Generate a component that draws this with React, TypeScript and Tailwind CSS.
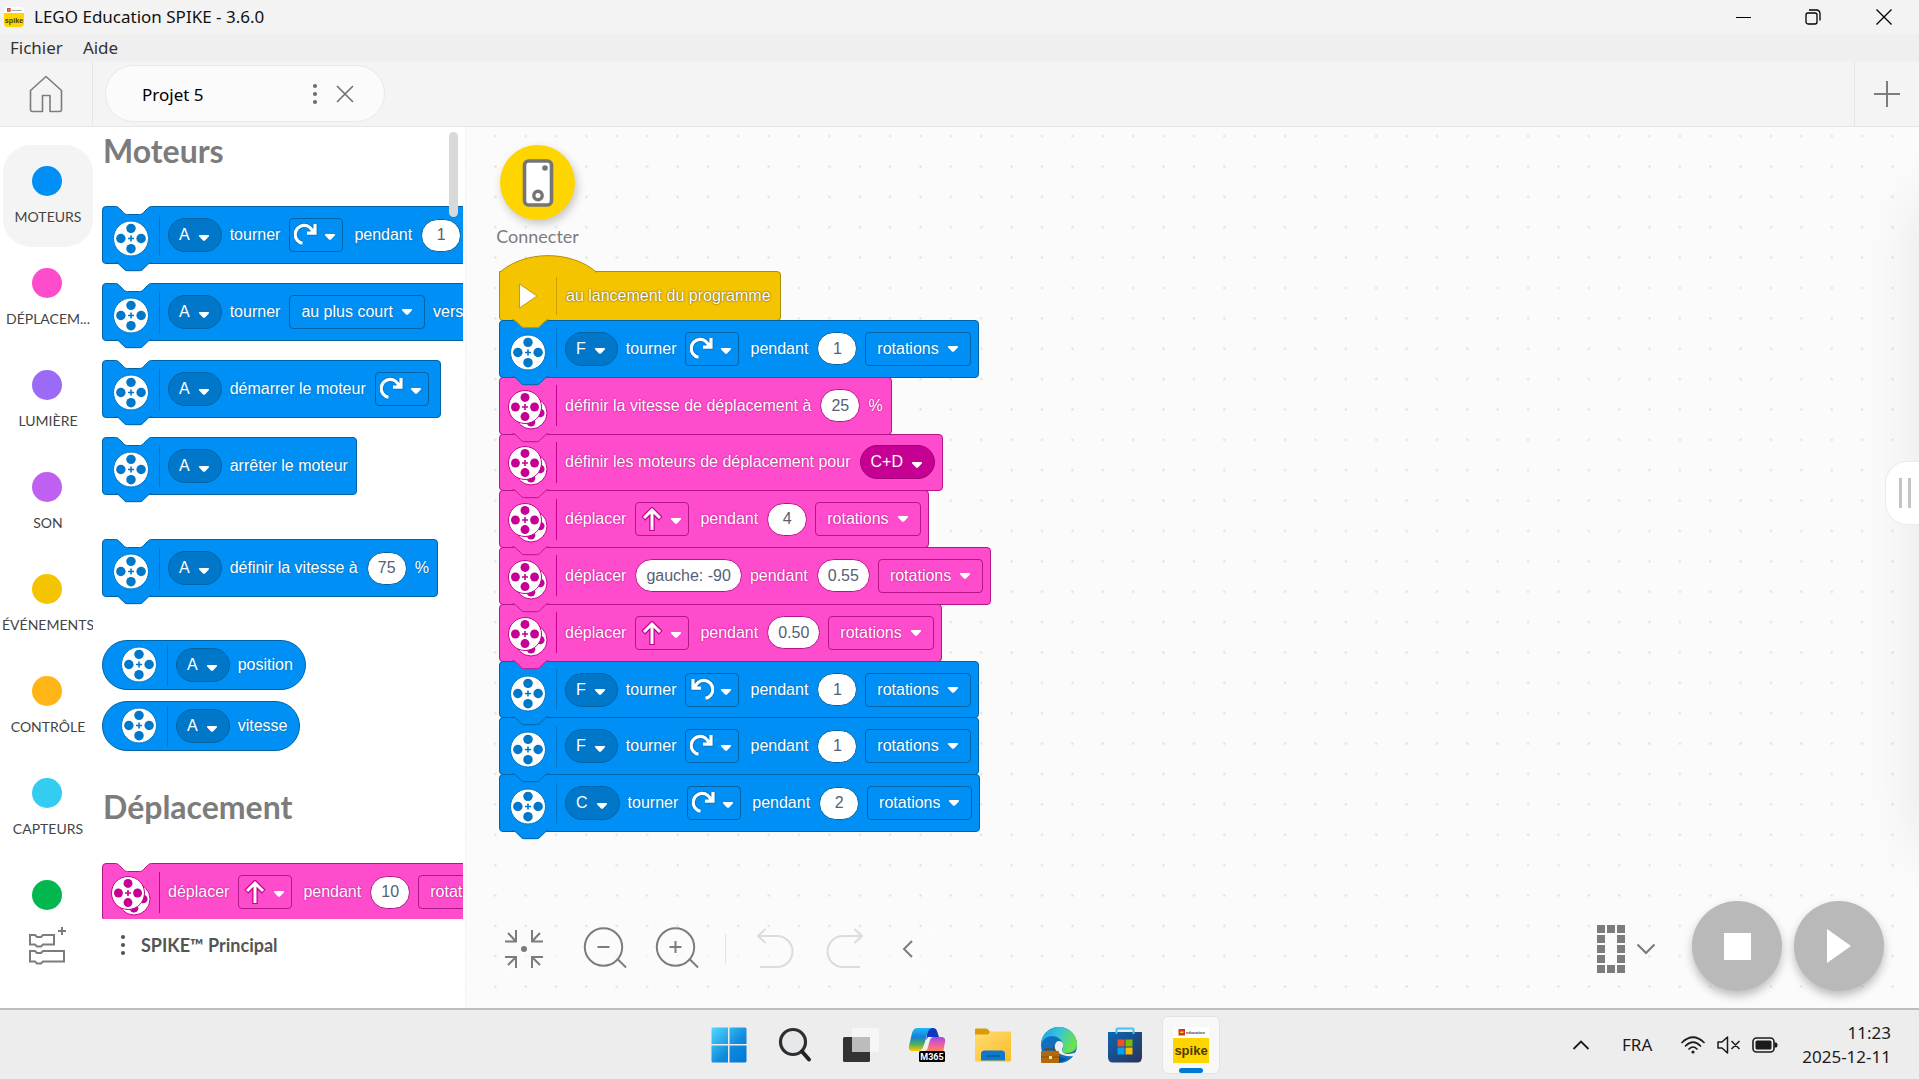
import type { ReactNode } from 'react';
import { clsx } from 'clsx';

type Tone = 'blue' | 'pink' | 'yellow';

const tones: Record<Tone, { body: string; shape: string; ink: string; label: string; line: string; field: string; pill: string; round: string }> = {
  blue: {
    body: 'bg-[#0090f5] border-[#0063a5]',
    shape: 'fill-[#0090f5] stroke-[#0063a5]',
    ink: '#0077c9',
    label: 'text-shadow-[0_0_2px_#0063a5]',
    line: 'bg-[#0077c9]',
    field: 'border-[#0063a5] bg-[#0090f5]',
    pill: 'border-[#0063a5] bg-[#0077c9]',
    round: 'border-[#0063a5]',
  },
  pink: {
    body: 'bg-[#ff4ccd] border-[#b3168b]',
    shape: 'fill-[#ff4ccd] stroke-[#b3168b]',
    ink: '#c60092',
    label: 'text-shadow-[0_0_2px_#a50079]',
    line: 'bg-[#c60092]',
    field: 'border-[#b3168b] bg-[#ff4ccd]',
    pill: 'border-[#a50079] bg-[#c60092]',
    round: 'border-[#b3168b]',
  },
  yellow: {
    body: 'bg-[#f5c400] border-[#b08c00]',
    shape: 'fill-[#f5c400] stroke-[#b08c00]',
    ink: '#c9a000',
    label: 'text-shadow-[0_0_2px_#3d3000]',
    line: 'bg-[#c9a000]',
    field: 'border-[#b08c00] bg-[#f5c400]',
    pill: 'border-[#b08c00] bg-[#c9a000]',
    round: 'border-[#b08c00]',
  },
};

const NOTCH = 'c2 0 3 1 4 2l4 4c1 1 2 2 4 2h12c2 0 3 -1 4 -2l4 -4c1 -1 2 -2 4 -2';

function Bump({ tone }: { tone: Tone }) {
  return (
    <svg className="pointer-events-none absolute top-full left-[12px] z-10 -mt-px" width="38" height="10" aria-hidden="true">
      <path d={`M0.5 1${NOTCH}V-1H0.5Z`} className={clsx(tones[tone].shape, 'stroke-none')} />
      <path d={`M0.5 0.7${NOTCH}`} className={tones[tone].shape} />
    </svg>
  );
}

function Notch({ tone }: { tone: Tone }) {
  return (
    <svg className="pointer-events-none absolute -top-px left-[12px]" width="38" height="10" aria-hidden="true">
      <path d={`M0.5 0.5${NOTCH}V-1H0.5Z`} fill="#fff" />
      <path d={`M0.5 0.5${NOTCH}`} className={clsx(tones[tone].shape, 'fill-none')} />
    </svg>
  );
}

function ReelFace({ cx, cy, r, color }: { cx: number; cy: number; r: number; color: string }) {
  const o = r * 0.58;
  return (
    <g>
      <circle cx={cx} cy={cy} r={r} fill="#fff" stroke={color} />
      <g fill={color}>
        <circle cx={cx} cy={cy - o} r={r * 0.27} />
        <circle cx={cx} cy={cy + o} r={r * 0.27} />
        <circle cx={cx - o} cy={cy} r={r * 0.27} />
        <circle cx={cx + o} cy={cy} r={r * 0.27} />
      </g>
      <path d={`M${cx - 3} ${cy}h6M${cx} ${cy - 3}v6`} stroke={color} strokeWidth="1.6" />
    </g>
  );
}

function Reel({ tone }: { tone: Tone }) {
  return (
    <svg width="40" height="40" viewBox="0 0 40 40" aria-hidden="true">
      {tone === 'pink' ? (
        <>
          <ReelFace cx={23} cy={23} r={16} color={tones.pink.ink} />
          <ReelFace cx={17} cy={17} r={16.5} color={tones.pink.ink} />
        </>
      ) : (
        <ReelFace cx={20} cy={19.5} r={17.5} color={tones.blue.ink} />
      )}
    </svg>
  );
}

function Arrow() {
  return (
    <svg width="12" height="8" viewBox="0 0 12 8" aria-hidden="true">
      <path d="M1.8 1h8.4c.9 0 1.2.8.6 1.4L7 6.400c-.6.6-1.4.6-2 0L1.200 2.400C.6 1.800.9 1 1.800 1z" fill="#fff" />
    </svg>
  );
}

function Block({ tone, notch, stacked, round, children }: { tone: Tone; notch?: boolean; stacked?: boolean; round?: boolean; children: ReactNode }) {
  const t = tones[tone];
  return (
    <div
      className={clsx(
        'relative flex w-max items-center border font-["Liberation_Sans",Arial,sans-serif] text-base text-white',
        round ? 'h-[50px] rounded-full pr-[11px] pl-[8px]' : 'rounded-[4px] pr-[7px]',
        !round && (stacked ? '-mb-px' : 'h-[58px]'),
        t.body,
      )}
    >
      {notch && <Notch tone={tone} />}
      {!round && <Bump tone={tone} />}
      <div className={clsx('flex w-[56px] justify-center', !round && 'pt-[8px]')}>
        <Reel tone={tone} />
      </div>
      <div className={clsx('mr-[8px] h-[41px] w-px', t.line)} />
      <div className="flex items-center gap-[8px]">{children}</div>
    </div>
  );
}

function Label({ tone, children, wide }: { tone: Tone; children: ReactNode; wide?: boolean }) {
  return <span className={clsx('mr-px whitespace-nowrap', wide && 'ml-[3px]', tones[tone].label)}>{children}</span>;
}

function Select({ tone, value, pill, name }: { tone: Tone; value: string; pill?: boolean; name: string }) {
  const t = tones[tone];
  return (
    <span className="relative flex items-center">
      <select
        aria-label={name}
        defaultValue={value}
        className={clsx(
          'field-sizing-content h-[34px] appearance-none border pr-[31px] text-base text-white outline-none',
          pill ? 'rounded-full pl-[10px]' : 'rounded-[4px] pl-[11px]',
          pill ? t.pill : t.field,
          !pill && t.label,
        )}
      >
        <option>{value}</option>
      </select>
      <span className={clsx('pointer-events-none absolute right-[12px]', pill && 'pt-[5px]')}>
        <Arrow />
      </span>
    </span>
  );
}

function Value({ tone, value, name }: { tone: Tone; value: string; name: string }) {
  return (
    <input
      type="text"
      aria-label={name}
      defaultValue={value}
      className={clsx('field-sizing-content h-[33px] min-w-[40px] rounded-full border bg-white px-[10px] text-center text-base text-[#575e75] outline-none', tones[tone].round)}
    />
  );
}

function TurnIcon({ ccw, color }: { ccw?: boolean; color: string }) {
  const d = 'M8.500 20.200A9 9 0 1 1 19 9.500M21 1V10.200H13';
  return (
    <svg width="24" height="24" viewBox="0 0 24 24" fill="none" className={ccw ? '-scale-x-100' : undefined} aria-hidden="true">
      <path d={d} stroke={color} strokeWidth="5" />
      <path d={d} stroke="#fff" strokeWidth="3.200" />
    </svg>
  );
}

function UpIcon({ color }: { color: string }) {
  return (
    <svg width="24" height="24" viewBox="0 0 24 24" fill="none" aria-hidden="true">
      <path d="M12 24V3M3.300 11.700L12 3L20.700 11.700" stroke={color} strokeWidth="5.500" />
      <path d="M12 23V3M4 11L12 3L20 11" stroke="#fff" strokeWidth="3" />
    </svg>
  );
}

function IconField({ tone, name, children }: { tone: Tone; name: string; children: ReactNode }) {
  return (
    <button type="button" aria-label={name} aria-haspopup="listbox" className={clsx('flex h-[34px] w-[54px] items-center justify-between rounded-[4px] border pr-[6px] pl-[4px]', tones[tone].field)}>
      {children}
      <span className="pt-[4px]">
        <Arrow />
      </span>
    </button>
  );
}

function TurnBlock({ port, turns, ccw }: { port: string; turns: string; ccw?: boolean }) {
  return (
    <Block tone="blue" stacked>
      <Select tone="blue" pill value={port} name="Port" />
      <Label tone="blue">tourner</Label>
      <IconField tone="blue" name="Sens de rotation">
        <TurnIcon ccw={ccw} color="#0077c9" />
      </IconField>
      <Label tone="blue" wide>pendant</Label>
      <Value tone="blue" value={turns} name="Durée" />
      <Select tone="blue" value="rotations" name="Unité" />
    </Block>
  );
}

function MoveBlock({ steer, amount }: { steer?: string; amount: string }) {
  return (
    <Block tone="pink" stacked>
      <Label tone="pink">déplacer</Label>
      {steer ? (
        <Value tone="pink" value={steer} name="Direction" />
      ) : (
        <IconField tone="pink" name="Direction">
          <UpIcon color="#c60092" />
        </IconField>
      )}
      <Label tone="pink" wide={!steer}>pendant</Label>
      <Value tone="pink" value={amount} name="Durée" />
      <Select tone="pink" value="rotations" name="Unité" />
    </Block>
  );
}

function HatBlock() {
  return (
    <div className="relative flex h-[50px] w-max items-center rounded-[4px] rounded-tl-none border border-[#b08c00] bg-[#f5c400] pr-[8px] font-['Liberation_Sans',Arial,sans-serif] text-base text-white">
      <svg className="absolute bottom-full -left-px -mb-px" width="100" height="18" aria-hidden="true">
        <path d="M0.5 18V17.500C26 -5 72 -5 98 17.500V18Z" fill="#f5c400" />
        <path d="M0.5 18V17.500C26 -5 72 -5 98 17.500" fill="none" stroke="#b08c00" />
      </svg>
      <Bump tone="yellow" />
      <div className="flex w-[56px] justify-center">
        <svg width="24" height="30" viewBox="0 0 24 30" aria-hidden="true">
          <path d="M3.500 3L21 15L3.500 27Z" fill="#fff" stroke="#c9a000" />
        </svg>
      </div>
      <div className="mr-[9px] h-[38px] w-px bg-[#c9a000]" />
      <Label tone="yellow">au lancement du programme</Label>
    </div>
  );
}

const categories = [
  { label: 'MOTEURS', dot: 'bg-[#0090f5]', active: true },
  { label: 'DÉPLACEM...', dot: 'bg-[#ff4ccd]' },
  { label: 'LUMIÈRE', dot: 'bg-[#9b6af6]' },
  { label: 'SON', dot: 'bg-[#c060f0]' },
  { label: 'ÉVÉNEMENTS', dot: 'bg-[#f5c400]' },
  { label: 'CONTRÔLE', dot: 'bg-[#ffb515]' },
  { label: 'CAPTEURS', dot: 'bg-[#34cdf2]' },
];

function CategoryNav() {
  return (
    <nav className="flex w-[93px] shrink-0 flex-col overflow-hidden pt-[18px] pl-[3px]">
      {categories.map((c) => (
        <button
          key={c.label}
          type="button"
          className={clsx('flex h-[102px] w-[90px] shrink-0 flex-col items-center rounded-[28px] pt-[21px]', c.active && 'bg-[#f4f4f4]')}
        >
          <span className={clsx('mr-[2px] size-[30px] shrink-0 rounded-full', c.dot)} />
          <span className="mt-[11px] text-sm leading-5 whitespace-nowrap text-[#444]">{c.label}</span>
        </button>
      ))}
      <button type="button" aria-label="Opérateurs" className="flex h-[51px] w-[90px] shrink-0 justify-center pt-[21px]">
        <span className="mr-[2px] size-[30px] rounded-full bg-[#00b84d]" />
      </button>
    </nav>
  );
}

function Heading({ children }: { children: ReactNode }) {
  return <h2 className="pl-px text-[32px] leading-10 font-bold text-[#7c7c7c]">{children}</h2>;
}

function Palette() {
  return (
    <div className="relative min-w-0 flex-1 overflow-hidden">
      <div className="mr-[2px] overflow-hidden pl-[9px]">
        <div className="h-[79px] pt-[4px]">
          <Heading>Moteurs</Heading>
        </div>
        <div className="flex flex-col gap-[19px]">
          <Block tone="blue" notch>
            <Select tone="blue" pill value="A" name="Port" />
            <Label tone="blue">tourner</Label>
            <IconField tone="blue" name="Sens de rotation">
              <TurnIcon color="#0077c9" />
            </IconField>
            <Label tone="blue" wide>pendant</Label>
            <Value tone="blue" value="1" name="Durée" />
            <Select tone="blue" value="rotations" name="Unité" />
          </Block>
          <Block tone="blue" notch>
            <Select tone="blue" pill value="A" name="Port" />
            <Label tone="blue">tourner</Label>
            <Select tone="blue" value="au plus court" name="Trajet" />
            <Label tone="blue">vers</Label>
            <Value tone="blue" value="0" name="Position" />
          </Block>
          <Block tone="blue" notch>
            <Select tone="blue" pill value="A" name="Port" />
            <Label tone="blue">démarrer le moteur</Label>
            <IconField tone="blue" name="Sens de rotation">
              <TurnIcon color="#0077c9" />
            </IconField>
            <span className="-ml-[4px]" />
          </Block>
          <Block tone="blue" notch>
            <Select tone="blue" pill value="A" name="Port" />
            <Label tone="blue">arrêter le moteur</Label>
          </Block>
        </div>
        <div className="mt-[44px]">
          <Block tone="blue" notch>
            <Select tone="blue" pill value="A" name="Port" />
            <Label tone="blue">définir la vitesse à</Label>
            <Value tone="blue" value="75" name="Vitesse" />
            <Label tone="blue">%</Label>
          </Block>
        </div>
        <div className="mt-[43px] flex flex-col gap-[11px]">
          <Block tone="blue" round>
            <Select tone="blue" pill value="A" name="Port" />
            <Label tone="blue">position</Label>
          </Block>
          <Block tone="blue" round>
            <Select tone="blue" pill value="A" name="Port" />
            <Label tone="blue">vitesse</Label>
          </Block>
        </div>
        <div className="h-[112px] pt-[36px]">
          <Heading>Déplacement</Heading>
        </div>
        <Block tone="pink" notch>
          <Label tone="pink">déplacer</Label>
          <IconField tone="pink" name="Direction">
            <UpIcon color="#c60092" />
          </IconField>
          <Label tone="pink" wide>pendant</Label>
          <Value tone="pink" value="10" name="Durée" />
          <Select tone="pink" value="rotations" name="Unité" />
        </Block>
      </div>
      <div className="absolute top-[5px] right-[7px] h-[85px] w-[9px] rounded-full bg-[#d9d9d9]" />
    </div>
  );
}

function Dots({ className }: { className?: string }) {
  return (
    <svg width="6" height="22" viewBox="0 0 6 22" fill="currentColor" className={className} aria-hidden="true">
      <circle cx="3" cy="3" r="2.100" />
      <circle cx="3" cy="11" r="2.100" />
      <circle cx="3" cy="19" r="2.100" />
    </svg>
  );
}

function SidebarFooter() {
  return (
    <div className="flex h-[89px] shrink-0 items-start pt-[6px]">
      <button type="button" aria-label="Ajouter des extensions" className="ml-[28px] text-[#7c7c7c]">
        <svg width="40" height="40" viewBox="0 0 40 40" fill="none" stroke="currentColor" strokeWidth="2" aria-hidden="true">
          <path d="M34 2V10M30 6H38" />
          <path d="M2 10H7L9 12H13L15 10H26V19.500H15L13 21.500H9L7 19.500H2Z" />
          <path d="M2 26H7L9 28H13L15 26H36V36.500H15L13 38.500H9L7 36.500H2Z" />
        </svg>
      </button>
      <button type="button" className="ml-[52px] flex items-center pt-[8px] text-[#555]">
        <Dots />
        <span className="ml-[15px] text-lg leading-6 font-bold">SPIKE™ Principal</span>
      </button>
    </div>
  );
}

function Sidebar() {
  return (
    <aside className="flex w-[466px] shrink-0 flex-col border-r border-[#f4f4f4] bg-white">
      <div className="flex min-h-0 flex-1">
        <CategoryNav />
        <Palette />
      </div>
      <SidebarFooter />
    </aside>
  );
}

function ConnectButton() {
  return (
    <button type="button" className="ml-[29px] flex w-[85px] flex-col items-center pt-[18px]">
      <span className="flex size-[75px] items-center justify-center rounded-full bg-[#ffd500] shadow-[2px_4px_10px_rgba(0,0,0,0.22)]">
        <svg width="32" height="48" viewBox="0 0 32 48" aria-hidden="true">
          <rect x="2.500" y="2" width="27" height="44" rx="4" fill="#fff" stroke="#757575" strokeWidth="3.600" />
          <circle cx="23" cy="9" r="2.800" fill="#757575" />
          <circle cx="16" cy="36.500" r="4.200" fill="#fff" stroke="#757575" strokeWidth="3.400" />
        </svg>
      </span>
      <span className="mt-[4px] text-lg leading-6 text-[#7c7c7c]">Connecter</span>
    </button>
  );
}

function Zoom({ plus }: { plus?: boolean }) {
  return (
    <svg width="44" height="44" viewBox="0 0 44 44" fill="none" stroke="currentColor" strokeWidth="2" aria-hidden="true">
      <circle cx="20.500" cy="20" r="18.700" />
      <path d="M34.500 32L43 40.500M14.500 20H26.500" />
      {plus && <path d="M20.500 14V26" />}
    </svg>
  );
}

function Undo({ flip }: { flip?: boolean }) {
  return (
    <svg width="38" height="42" viewBox="0 0 38 42" fill="none" stroke="#dcdcdc" strokeWidth="2" className={flip ? '-scale-x-100' : undefined} aria-hidden="true">
      <path d="M2 8H21A15.500 15.500 0 0 1 21 39H4M9.500 1L2 8L9.500 15" />
    </svg>
  );
}

function CanvasTools() {
  return (
    <div className="flex items-center rounded-lg bg-[#fbfbfb]/60 pr-[20px] text-[#7c7c7c]">
      <button type="button" aria-label="Ajuster à l'écran">
        <svg width="40" height="40" viewBox="0 0 40 40" fill="none" stroke="currentColor" strokeWidth="2" aria-hidden="true">
          <path d="M1 12.500H12V1M4 4L12 12.500M39 12.500H28V1M36 4L28 12.500M1 28H12V39M4 36L12 28M39 28H28V39M36 36L28 28" />
          <circle cx="20" cy="20" r="3" fill="currentColor" stroke="none" />
        </svg>
      </button>
      <button type="button" aria-label="Zoom arrière" className="ml-[39px]">
        <Zoom />
      </button>
      <button type="button" aria-label="Zoom avant" className="ml-[28px]">
        <Zoom plus />
      </button>
      <span className="ml-[26px] h-[30px] w-px bg-[#e4e4e4]" />
      <button type="button" aria-label="Annuler" className="ml-[30px]">
        <Undo />
      </button>
      <button type="button" aria-label="Rétablir" className="ml-[32px]">
        <Undo flip />
      </button>
      <button type="button" aria-label="Réduire" className="ml-[38px]">
        <svg width="12" height="20" viewBox="0 0 12 20" fill="none" stroke="currentColor" strokeWidth="2" aria-hidden="true">
          <path d="M10 2L2 10L10 18" />
        </svg>
      </button>
    </div>
  );
}

function RunControls() {
  return (
    <div className="flex items-center">
      <button type="button" aria-label="Matrice du hub" className="flex items-center gap-[11px] pt-[6px] text-[#7c7c7c]">
        <svg width="28" height="48" viewBox="0 0 28 48" fill="currentColor" aria-hidden="true">
          {[0, 1, 2, 3, 4].map((r) =>
            [0, 1, 2].map((c) => (c === 1 && r > 0 && r < 4 ? null : <rect key={`${r}${c}`} x={c * 10} y={r * 10} width="8" height="8" />)),
          )}
        </svg>
        <svg width="20" height="12" viewBox="0 0 20 12" fill="none" stroke="currentColor" strokeWidth="2.200" aria-hidden="true">
          <path d="M1.500 1.500L10 10L18.500 1.500" />
        </svg>
      </button>
      <button type="button" aria-label="Arrêter" className="ml-[36px] flex size-[90px] items-center justify-center rounded-full bg-[#b9b9b9] shadow-[0_5px_10px_rgba(0,0,0,0.25)]">
        <span className="size-[27px] bg-white" />
      </button>
      <button type="button" aria-label="Lancer" className="ml-[12px] flex size-[90px] items-center justify-center rounded-full bg-[#b9b9b9] shadow-[0_5px_10px_rgba(0,0,0,0.25)]">
        <svg width="24" height="34" viewBox="0 0 24 34" aria-hidden="true">
          <path d="M0 0L24 17L0 34Z" fill="#fff" />
        </svg>
      </button>
    </div>
  );
}

function Workspace() {
  return (
    <main className="relative flex min-w-0 flex-1 flex-col overflow-hidden bg-[#fbfbfb]">
      <svg className="absolute inset-0 size-full" aria-hidden="true">
        <defs>
          <pattern id="grid" x="14.100" y="-6.100" width="30.375" height="30.375" patternUnits="userSpaceOnUse">
            <rect x="14.200" y="14.200" width="2" height="2" fill="#dcdcdc" />
          </pattern>
        </defs>
        <rect width="100%" height="100%" fill="url(#grid)" />
      </svg>
      <div className="absolute top-[70px] bottom-[160px] left-full w-[40px] shadow-[0_0_60px_rgba(0,0,0,0.1)]" />
      <div className="relative flex flex-1 flex-col">
        <ConnectButton />
        <section aria-label="Programme" className="mt-[23px] ml-[33px]">
          <HatBlock />
          <div className="-mt-px grid h-[511px] auto-rows-fr">
            <TurnBlock port="F" turns="1" />
            <Block tone="pink" stacked>
              <Label tone="pink">définir la vitesse de déplacement à</Label>
              <Value tone="pink" value="25" name="Vitesse" />
              <Label tone="pink">%</Label>
            </Block>
            <Block tone="pink" stacked>
              <Label tone="pink">définir les moteurs de déplacement pour</Label>
              <Select tone="pink" pill value="C+D" name="Ports" />
            </Block>
            <MoveBlock amount="4" />
            <MoveBlock steer="gauche: -90" amount="0.55" />
            <MoveBlock amount="0.50" />
            <TurnBlock port="F" turns="1" ccw />
            <TurnBlock port="F" turns="1" />
            <TurnBlock port="C" turns="2" />
          </div>
        </section>
        <div className="mt-auto flex items-center justify-between pr-[35px] pb-[17px] pl-[38px]">
          <div className="pt-[6px]">
            <CanvasTools />
          </div>
          <RunControls />
        </div>
      </div>
      <button type="button" aria-label="Ouvrir le panneau" className="absolute top-[334px] right-0 flex h-[64px] w-[34px] items-center justify-center gap-[6px] rounded-l-[22px] border border-r-0 border-[#ebebeb] bg-white pl-[4px]">
        <span className="h-[30px] w-[3px] bg-[#c4c4c4]" />
        <span className="h-[30px] w-[3px] bg-[#c4c4c4]" />
      </button>
    </main>
  );
}

function SpikeLogo({ size }: { size: number }) {
  return (
    <svg width={size} height={size} viewBox="0 0 36 36" aria-hidden="true">
      <rect width="36" height="36" fill="#fff" />
      <path d="M0 11H36V36H0Z" fill="#ffd500" />
      <rect x="5.500" y="2" width="6.500" height="6.500" fill="#d0342c" />
      <rect x="7" y="4.500" width="3.500" height="1.500" fill="#ffd500" />
      <text x="13" y="7" fontSize="4" fontWeight="700" fill="#444" fontFamily="Liberation Sans, sans-serif">education</text>
      <text x="18" y="28" fontSize="13" fontWeight="700" textAnchor="middle" fill="#4a3c00" fontFamily="Liberation Sans, sans-serif">spike</text>
    </svg>
  );
}

function TitleBar() {
  return (
    <header className="font-['Noto_Sans',sans-serif] text-[#111]">
      <div className="flex h-[34px] items-center bg-[#f3f3f3]">
        <span className="ml-[4px] overflow-hidden rounded-[4px]">
          <SpikeLogo size={20} />
        </span>
        <h1 className="ml-[10px] text-[17px]">LEGO Education SPIKE - 3.6.0</h1>
        <div className="ml-auto flex items-center">
          <button type="button" aria-label="Réduire" className="flex h-[34px] w-[70px] items-center justify-center">
            <span className="h-px w-[15px] bg-black" />
          </button>
          <button type="button" aria-label="Restaurer" className="flex h-[34px] w-[70px] items-center justify-center">
            <svg width="16" height="16" viewBox="0 0 16 16" fill="none" stroke="#000" strokeWidth="1.300" aria-hidden="true">
              <rect x="1" y="4" width="11" height="11" rx="2" />
              <path d="M4 1H11.500A3.500 3.500 0 0 1 15 4.500V11.500" />
            </svg>
          </button>
          <button type="button" aria-label="Fermer" className="flex h-[34px] w-[71px] items-center justify-center">
            <svg width="16" height="16" viewBox="0 0 16 16" stroke="#000" strokeWidth="1.300" aria-hidden="true">
              <path d="M0.500 0.500L15.500 15.500M15.500 0.500L0.500 15.500" />
            </svg>
          </button>
        </div>
      </div>
      <div className="flex h-[27px] items-center gap-[20px] bg-[#efefef] pl-[10px] text-[17px] text-[#333]">
        <button type="button">Fichier</button>
        <button type="button">Aide</button>
      </div>
    </header>
  );
}

function ProjectTabs() {
  return (
    <div className="flex h-[66px] shrink-0 items-stretch border-b border-[#e6e6e6] bg-[#f4f4f4]">
      <button type="button" aria-label="Accueil" className="flex w-[93px] items-center justify-center border-r border-[#e6e6e6] text-[#7c7c7c]">
        <svg width="34" height="38" viewBox="0 0 34 38" fill="none" stroke="currentColor" strokeWidth="1.600" strokeLinejoin="round" aria-hidden="true">
          <path d="M1.500 15.500L17 1.500L32.500 15.500V34.500Q32.500 36.500 30.500 36.500H21V20.500H13.500V36.500H3.500Q1.500 36.500 1.500 34.500Z" />
        </svg>
      </button>
      <div className="my-auto ml-[12px] flex h-[57px] w-[280px] items-center rounded-full border border-[#e9e9e9] bg-[#fbfbfb]">
        <span className="ml-[36px] flex-1 pt-[3px] font-['Noto_Sans',sans-serif] text-[17px] text-black">Projet 5</span>
        <button type="button" aria-label="Options du projet" className="text-[#6f6f6f]">
          <Dots />
        </button>
        <button type="button" aria-label="Fermer le projet" className="mr-[30px] ml-[18px]">
          <svg width="18" height="18" viewBox="0 0 18 18" stroke="#6f6f6f" strokeWidth="1.600" aria-hidden="true">
            <path d="M1 1L17 17M17 1L1 17" />
          </svg>
        </button>
      </div>
      <button type="button" aria-label="Nouveau projet" className="ml-auto flex w-[65px] items-center justify-center border-l border-[#e6e6e6]">
        <svg width="28" height="28" viewBox="0 0 28 28" stroke="#7c7c7c" strokeWidth="2" aria-hidden="true">
          <path d="M14 1V27M1 14H27" />
        </svg>
      </button>
    </div>
  );
}

function TaskIcon({ name, active, children }: { name: string; active?: boolean; children: ReactNode }) {
  return (
    <button
      type="button"
      aria-label={name}
      className={clsx('relative mx-[4px] flex h-[58px] w-[58px] items-center justify-center rounded-md border', active ? 'border-[#e3e3e3] bg-[#f8f8f8]' : 'border-transparent')}
    >
      {children}
      {active && <span className="absolute bottom-0 h-[5px] w-[24px] rounded-full bg-[#0078d4]" />}
    </button>
  );
}

function Taskbar() {
  return (
    <footer className="grid h-[71px] shrink-0 grid-cols-[1fr_auto_1fr] items-center border-t-2 border-[#bdbdbd] bg-[#ededed] font-['Noto_Sans',sans-serif] text-[#1b1b1b]">
      <div />
      <div className="flex items-center">
        <TaskIcon name="Démarrer">
          <svg width="36" height="36" viewBox="0 0 36 36" aria-hidden="true">
            <defs>
              <linearGradient id="win" x1="0" y1="0" x2="1" y2="1">
                <stop offset="0" stopColor="#50d8ff" />
                <stop offset="0.600" stopColor="#0f88dd" />
                <stop offset="1" stopColor="#0078d4" />
              </linearGradient>
            </defs>
            <path d="M2 .5H17V17H.5V2A1.500 1.500 0 0 1 2 .5ZM18.500 .5H34A1.500 1.500 0 0 1 35.500 2V17H18.500ZM.5 18.500H17V35.500H2A1.500 1.500 0 0 1 .5 34ZM18.500 18.500H35.500V34A1.500 1.500 0 0 1 34 35.500H18.500Z" fill="url(#win)" />
          </svg>
        </TaskIcon>
        <TaskIcon name="Rechercher">
          <svg width="34" height="36" viewBox="0 0 34 36" fill="none" aria-hidden="true">
            <circle cx="15" cy="15" r="12.500" fill="#e6e8ea" stroke="#2e2e2e" strokeWidth="3.200" />
            <path d="M24 24.500L31 32.500" stroke="#222" strokeWidth="4" strokeLinecap="round" />
          </svg>
        </TaskIcon>
        <TaskIcon name="Vue des tâches">
          <svg width="36" height="36" viewBox="0 0 36 36" aria-hidden="true">
            <rect x="0" y="10" width="27" height="25" rx="1.500" fill="#333" />
            <rect x="9" y="1" width="27" height="24" rx="1.500" fill="#f6f6f6" />
            <path d="M9 10H27V25H9Z" fill="#bcbcbc" />
          </svg>
        </TaskIcon>
        <TaskIcon name="Microsoft 365 Copilot">
          <svg width="38" height="36" viewBox="0 0 38 36" aria-hidden="true">
            <defs>
              <linearGradient id="copA" x1="0" y1="0" x2="0" y2="1">
                <stop offset="0" stopColor="#22b8f5" />
                <stop offset="0.400" stopColor="#1580d8" />
                <stop offset="0.700" stopColor="#4fae5c" />
                <stop offset="1" stopColor="#ffc800" />
              </linearGradient>
              <linearGradient id="copB" x1="0" y1="0" x2="0" y2="1">
                <stop offset="0" stopColor="#a24be8" />
                <stop offset="0.500" stopColor="#ee5f9f" />
                <stop offset="1" stopColor="#ff9040" />
              </linearGradient>
            </defs>
            <path d="M20 1H25Q28 1 29 4L31 10H22L18 14Z" fill="#1238c0" />
            <path d="M9 1H24Q20.500 2 19 7L16 19Q14.500 24 11 24H4Q0 24 1 19L4 6Q5.500 1 9 1Z" fill="url(#copA)" />
            <path d="M26 10H33Q38 10 37 15L35 26H14L17 24Q19 24 20 20L22 13Q23 10 26 10Z" fill="url(#copB)" />
            <path d="M20 10H23Q20 14 19 18T15 24H12Q15 22 16 18T20 10Z" fill="#f2f2f2" />
            <rect x="11" y="24" width="26" height="11" rx="1.500" fill="#000" />
            <text x="24" y="32.800" textAnchor="middle" fontSize="9" fontWeight="700" fill="#fff" fontFamily="Roboto, sans-serif">M365</text>
          </svg>
        </TaskIcon>
        <TaskIcon name="Explorateur de fichiers">
          <svg width="36" height="36" viewBox="0 0 36 36" aria-hidden="true">
            <defs>
              <linearGradient id="fold" x1="0" y1="0" x2="1" y2="1">
                <stop offset="0" stopColor="#ffdd75" />
                <stop offset="1" stopColor="#fbbc25" />
              </linearGradient>
            </defs>
            <path d="M0 2.500Q0 1.500 1 1.500H11Q12.500 1.500 13.500 3L15 5H20V12H0Z" fill="#dc9a08" />
            <path d="M0 7.500H13L15.500 4.500H35Q36 4.500 36 5.500V33Q36 34.500 35 34.500H1Q0 34.500 0 33Z" fill="url(#fold)" />
            <path d="M6 33.500V27Q6 23.500 9.500 23.500H26.500Q30 23.500 30 27V33.500Z" fill="#0c79cf" />
            <path d="M11 29H25" stroke="#074f93" strokeWidth="1.200" />
          </svg>
        </TaskIcon>
        <TaskIcon name="Microsoft Edge">
          <svg width="36" height="38" viewBox="0 0 36 38" aria-hidden="true">
            <defs>
              <linearGradient id="edgeA" x1="0" y1="0" x2="1" y2="0.400">
                <stop offset="0" stopColor="#1b9de2" />
                <stop offset="0.500" stopColor="#35c5d8" />
                <stop offset="1" stopColor="#6be24a" />
              </linearGradient>
            </defs>
            <circle cx="18" cy="19" r="18" fill="#0f70c0" />
            <path d="M0 18C1 7 9 1 18 1S36 8 36 18C36 25 30 27 25 27C20 27 21 24 22 22C23 19 21 11 12 10C6 10 2 13 0 18Z" fill="url(#edgeA)" />
            <path d="M18 15C21 15 23 18 22 21C20 24 21 28 27 28Q31 28 36 26L34 30Q27 31 22 29C16 27 13 23 14 19Q15 15 18 15Z" fill="#ededed" />
            <path d="M13 18C11 24 15 31 26 33L18 37H12V20Z" fill="#0a4f9c" />
            <rect x="0" y="25" width="18" height="12" rx="1" fill="#b0690d" />
            <path d="M5 25V23H13V25" fill="none" stroke="#7a4304" strokeWidth="1.500" />
            <path d="M0 31H18" stroke="#8b4f06" />
            <rect x="8" y="30" width="3" height="3" fill="#ffe08a" />
          </svg>
        </TaskIcon>
        <TaskIcon name="Microsoft Store">
          <svg width="36" height="36" viewBox="0 0 36 36" aria-hidden="true">
            <defs>
              <linearGradient id="store" x1="0" y1="0" x2="1" y2="1">
                <stop offset="0" stopColor="#0c66b4" />
                <stop offset="1" stopColor="#2a3358" />
              </linearGradient>
            </defs>
            <path d="M1 5H35V30Q35 35.500 30 35.500H6Q1 35.500 1 30Z" fill="url(#store)" />
            <path d="M9.500 7V2.500Q9.500 1.500 10.500 1.500H25.500Q26.500 1.500 26.500 2.500V7" fill="none" stroke="#42c4f5" strokeWidth="2" />
            <path d="M10.500 12.500H17.500V19.500H10.500Z" fill="#f25022" />
            <path d="M18.500 12.500H25.500V19.500H18.500Z" fill="#7fba00" />
            <path d="M10.500 20.500H17.500V27.500H10.500Z" fill="#00a4ef" />
            <path d="M18.500 20.500H25.500V27.500H18.500Z" fill="#ffb900" />
          </svg>
        </TaskIcon>
        <TaskIcon name="LEGO Education SPIKE" active>
          <SpikeLogo size={36} />
        </TaskIcon>
      </div>
      <div className="flex items-center justify-end pr-[28px]">
        <button type="button" aria-label="Icônes masquées">
          <svg width="18" height="12" viewBox="0 0 18 12" fill="none" stroke="currentColor" strokeWidth="1.800" aria-hidden="true">
            <path d="M1.500 10L9 2.500L16.500 10" />
          </svg>
        </button>
        <button type="button" className="ml-[32px] text-[17px]">FRA</button>
        <button type="button" aria-label="Réseau, son et batterie" className="ml-[28px] flex items-center gap-[11px]">
          <svg width="26" height="20" viewBox="0 0 26 20" fill="none" stroke="currentColor" strokeWidth="1.700" strokeLinecap="round" aria-hidden="true">
            <path d="M2 7.500Q13 -3 24 7.500M5.500 11Q13 3.500 20.500 11M9 14Q13 10 17 14" />
            <circle cx="13" cy="17" r="1.600" fill="currentColor" stroke="none" />
          </svg>
          <svg width="24" height="18" viewBox="0 0 24 18" fill="none" stroke="currentColor" strokeWidth="1.500" strokeLinejoin="round" aria-hidden="true">
            <path d="M1 6V12H5L10.500 17V1L5 6ZM14.500 5L22.500 13M22.500 5L14.500 13" />
          </svg>
          <svg width="26" height="16" viewBox="0 0 26 16" aria-hidden="true">
            <rect x="1" y="1" width="21" height="14" rx="3.500" fill="none" stroke="currentColor" strokeWidth="1.600" />
            <rect x="3.500" y="3.500" width="16" height="9" rx="1.500" fill="currentColor" />
            <path d="M22.500 5.500H24Q25.500 5.500 25.500 8T24 10.500H22.500Z" fill="currentColor" />
          </svg>
        </button>
        <button type="button" className="ml-[24px] text-right text-[17px] leading-6">
          <time className="block">11:23</time>
          <time className="block">2025-12-11</time>
        </button>
      </div>
    </footer>
  );
}

export default function App() {
  return (
    <div className="flex h-screen flex-col overflow-hidden bg-white font-[Lato,sans-serif]">
      <TitleBar />
      <ProjectTabs />
      <div className="flex min-h-0 flex-1">
        <Sidebar />
        <Workspace />
      </div>
      <Taskbar />
    </div>
  );
}
